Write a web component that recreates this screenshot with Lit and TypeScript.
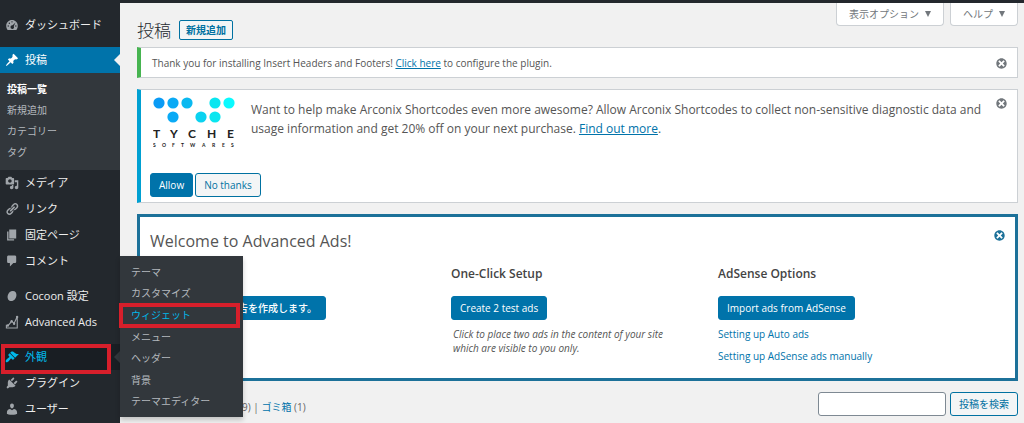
import { LitElement, html, css, svg, nothing } from "lit";
import { customElement, property } from "lit/decorators.js";

const ICONS: Record<string, unknown> = {
  dashboard: svg`<path fill-rule="evenodd" d="M3.76 17h12.48c1.34-1.63 2.01-3.65 2.01-6 0-4.56-3.69-8.25-8.25-8.25S1.75 6.44 1.75 11c0 2.35.67 4.37 2.01 6zM9 5.500a1 1 0 1 1 2 0 1 1 0 0 1-2 0zM5.200 7.500a1 1 0 1 1 2 0 1 1 0 0 1-2 0zM12.500 11.900c.3.4.5.9.5 1.400A2.600 2.600 0 1 1 10.900 10.500L15 6.600zM3.600 11.500a1 1 0 1 1 2 0 1 1 0 0 1-2 0zM14.500 11.500a1 1 0 1 1 2 0 1 1 0 0 1-2 0z"/>`,
  post: svg`<path d="M10.44 3.02l1.82-1.82 6.36 6.35-1.83 1.82c-1.05-.68-2.48-.57-3.41.36l-.75.75c-.92.93-1.04 2.35-.35 3.41l-1.83 1.82-2.41-2.41-2.8 2.79c-.42.42-3.38 2.71-3.8 2.29s1.86-3.39 2.28-3.81l2.79-2.79L4.1 9.36l1.83-1.82c1.05.69 2.48.57 3.4-.36l.75-.75c.93-.92 1.05-2.35.36-3.41z"/>`,
  media: svg`<path fill-rule="evenodd" d="M13 11V4c0-.55-.45-1-1-1h-1.67L9 1H5L3.67 3H2c-.55 0-1 .45-1 1v7c0 .55.45 1 1 1h10c.55 0 1-.45 1-1zM7 4.500c1.380 0 2.500 1.120 2.500 2.500S8.380 9.500 7 9.500 4.500 8.380 4.500 7 5.620 4.500 7 4.500zM14 6h5v10.500c0 1.380-1.120 2.500-2.500 2.500S14 17.880 14 16.500s1.120-2.500 2.500-2.500c.17 0 .34.02.5.05V9h-3V6zm-4 8.050V13h2v3.500c0 1.380-1.120 2.500-2.500 2.500S7 17.880 7 16.500 8.120 14 9.500 14c.17 0 .34.02.5.05z"/>`,
  links: svg`<path d="M17.74 2.76c1.68 1.69 1.68 4.41 0 6.1l-1.53 1.52c-1.12 1.12-2.7 1.47-4.14 1.09l2.62-2.61.76-.77.76-.76c.84-.84.84-2.2 0-3.04-.84-.85-2.2-.85-3.04 0l-.77.76-3.38 3.38c-.37-1.44-.02-3.02 1.1-4.14l1.52-1.53c1.69-1.68 4.42-1.68 6.1 0zM8.59 13.43l5.34-5.34c.42-.42.42-1.1 0-1.52-.44-.43-1.13-.39-1.53 0l-5.33 5.34c-.42.42-.42 1.1 0 1.52.44.43 1.13.39 1.52 0zm-.76 2.29l4.14-4.15c.38 1.44.03 3.02-1.09 4.14l-1.52 1.53c-1.69 1.68-4.41 1.68-6.1 0-1.68-1.68-1.68-4.42 0-6.1l1.53-1.52c1.12-1.12 2.7-1.47 4.14-1.1l-4.14 4.15c-.85.84-.85 2.2 0 3.05.84.84 2.2.84 3.04 0z"/>`,
  page: svg`<path d="M6 15V2h10v13H6zm-1 1h8v2H3V5h2v11z"/>`,
  comment: svg`<path d="M5 2h9c1.100 0 2 .9 2 2v7c0 1.100-.9 2-2 2h-2l-5 5v-5H5c-1.100 0-2-.9-2-2V4c0-1.100.9-2 2-2z"/>`,
  cocoon: svg`<ellipse cx="10" cy="10" rx="6" ry="7.500" transform="rotate(28 10 10)"/>`,
  chart: svg`<path fill="none" stroke="currentColor" stroke-width="1.600" d="M2 14v4.500h15.500V2L13 12l-3.500-3L4 15.500"/><circle cx="9.500" cy="9" r="1.700"/><circle cx="13" cy="12.500" r="1.700"/><circle cx="17.300" cy="2.700" r="1.700"/><circle cx="4" cy="15" r="1.700"/>`,
  appearance: svg`<path d="M14.48 11.06L7.41 3.99l1.5-1.5c.5-.56 2.3-.47 3.51.32 1.21.8 1.43 1.28 2.91 2.1 1.18.64 2.45 1.26 4.45.85zm-.71.71L6.7 4.7 4.93 6.47c-.39.39-.39 1.02 0 1.41l1.06 1.06c.39.39.39 1.03 0 1.42-.6.6-1.43 1.11-2.21 1.69-.35.26-.7.53-1.01.84C1.43 14.23.4 16.08 1.4 17.07c.99 1 2.84-.03 4.18-1.36.31-.31.58-.66.85-1.02.57-.78 1.08-1.61 1.69-2.21.39-.39 1.02-.39 1.41 0l1.06 1.06c.39.39 1.02.39 1.41 0z"/>`,
  plugins: svg`<path d="M13.11 4.36L9.87 7.6 8 5.73l3.24-3.24c.35-.34 1.05-.2 1.56.32.52.51.66 1.21.31 1.55zm-8 1.77l.91-1.12 9.01 9.01-1.19.84c-.71.71-2.63 1.16-3.82 1.16H6.14L4.9 17.26c-.59.59-1.54.59-2.12 0-.59-.58-.59-1.53 0-2.12l1.24-1.24v-3.88c0-1.13.4-3.19 1.09-3.89zm7.26 3.97l3.24-3.24c.34-.35 1.04-.21 1.55.31.52.51.66 1.21.31 1.55l-3.24 3.25z"/>`,
  users: svg`<path d="M10 9.25c-2.27 0-2.73-3.44-2.73-3.44C7 4.02 7.82 2 9.97 2c2.16 0 2.98 2.02 2.71 3.81 0 0-.41 3.44-2.68 3.44zm0 2.57L12.72 10c2.39 0 4.52 2.33 4.52 4.53v2.49s-3.65 1.13-7.24 1.13c-3.65 0-7.24-1.13-7.24-1.13v-2.49c0-2.25 1.94-4.48 4.47-4.48z"/>`,
  dismiss: svg`<path fill-rule="evenodd" d="M10 2c4.420 0 8 3.580 8 8s-3.580 8-8 8-8-3.580-8-8 3.580-8 8-8zm5 11l-3-3 3-3-2-2-3 3-3-3-2 2 3 3-3 3 2 2 3-3 3 3z"/>`,
};

@customElement("dash-icon")
class DashIcon extends LitElement {
  @property() name = "";
  static styles = css`
    :host { display: block; width: 14px; height: 14px; flex: none; }
    svg { display: block; width: 100%; height: 100%; fill: currentColor; }
  `;
  render() {
    return html`<svg viewBox="0 0 20 20" aria-hidden="true">${ICONS[this.name]}</svg>`;
  }
}

interface Item {
  icon: string;
  label: string;
  state?: "current" | "open";
  sub?: string[];
}

const MENU: Item[][] = [
  [{ icon: "dashboard", label: "ダッシュボード" }],
  [
    { icon: "post", label: "投稿", state: "current", sub: ["投稿一覧", "新規追加", "カテゴリー", "タグ"] },
    { icon: "media", label: "メディア" },
    { icon: "links", label: "リンク" },
    { icon: "page", label: "固定ページ" },
    { icon: "comment", label: "コメント" },
  ],
  [
    { icon: "cocoon", label: "Cocoon 設定" },
    { icon: "chart", label: "Advanced Ads" },
  ],
  [
    {
      icon: "appearance",
      label: "外観",
      state: "open",
      sub: ["テーマ", "カスタマイズ", "ウィジェット", "メニュー", "ヘッダー", "背景", "テーマエディター"],
    },
    { icon: "plugins", label: "プラグイン" },
    { icon: "users", label: "ユーザー" },
  ],
];

@customElement("admin-menu")
class AdminMenu extends LitElement {
  static styles = css`
    :host { display: block; background: #23282d; font-size: 11px; }
    nav { display: flex; flex-direction: column; gap: 9px; padding-top: 9px; }
    ul { list-style: none; margin: 0; padding: 0; }
    .item { position: relative; }
    a { text-decoration: none; color: inherit; }
    .top { display: flex; align-items: center; gap: 6px; height: 26px; padding-left: 5px; color: #eee; position: relative; }
    .top dash-icon { color: #a0a5aa; }
    .current > .top { background: #0073aa; color: #fff; }
    .current > .top dash-icon { color: #fff; }
    .current > .top::after, .open > .top::after {
      content: ""; position: absolute; right: 0; top: 7px;
      border: 6px solid transparent; border-left: 0; border-right-color: #f1f1f1;
    }
    .open > .top { background: #191e23; color: #00b9eb; }
    .open > .top dash-icon { color: #00b9eb; }
    .open > .top::after { border-right-color: #32373c; }
    .sub { background: #32373c; color: #b4b9be; font-size: 10px; }
    .current .sub { padding: 6px 7px 7px; line-height: 21px; }
    .current .sub li:first-child { color: #fff; font-weight: 700; }
    .open .sub {
      position: absolute; left: 100%; bottom: -47px; z-index: 2; box-sizing: border-box;
      width: 123px; height: 161px; padding: 5px 0; display: flex; flex-direction: column;
      box-shadow: 0 3px 5px rgba(0, 0, 0, 0.2);
    }
    .open .sub li { flex: 1; display: flex; align-items: center; padding-left: 11px; position: relative; }
    .open .sub .marked { color: #00b9eb; }
    .mark { position: absolute; border: 4px solid #d71f2b; box-sizing: border-box; pointer-events: none; z-index: 3; }
    .mark-top { left: 1px; right: 9px; top: 0; height: 30px; }
    .mark-sub { left: -1px; right: 3px; top: -1px; height: 25px; }
  `;

  private row(item: Item) {
    const open = item.state === "open";
    return html`<li class="item ${item.state ?? ""}">
      <a class="top" href="#"><dash-icon name=${item.icon}></dash-icon><span>${item.label}</span></a>
      ${item.sub
        ? html`<ul class="sub">
            ${item.sub.map((s, i) =>
              open && i === 2
                ? html`<li class="marked"><a href="#">${s}</a><span class="mark mark-sub"></span></li>`
                : html`<li><a href="#">${s}</a></li>`
            )}
          </ul>`
        : nothing}
      ${open ? html`<span class="mark mark-top"></span>` : nothing}
    </li>`;
  }

  render() {
    return html`<nav>${MENU.map((g) => html`<ul>${g.map((i) => this.row(i))}</ul>`)}</nav>`;
  }
}

const DOTS: [number, number, string][] = [
  [6, 6, "#0a9bf5"], [20, 6, "#0aaaf5"], [34, 6, "#0ab9f0"], [62, 6, "#0ae6f0"], [76, 6, "#0afaff"],
  [20, 20, "#0aaaf5"], [48, 20, "#0ad2f0"], [62, 20, "#0ae6f0"],
];

@customElement("app-root")
class AppRoot extends LitElement {
  static styles = css`
    :host {
      display: block; min-height: 100vh; background: #f1f1f1; color: #555;
      font: 10px/16px "Open Sans", "Noto Sans CJK JP", sans-serif;
    }
    .bar { height: 3px; background: #23282d; }
    .layout { display: grid; grid-template-columns: 120px minmax(0, 1fr); min-height: calc(100vh - 3px); }
    main { padding: 0 6px 0 17px; }
    h1, h2, h3, p { margin: 0; }
    a { color: #0073aa; }
    button { font: inherit; margin: 0; cursor: pointer; }
    header { display: flex; justify-content: space-between; align-items: flex-start; height: 44px; }
    .title { display: flex; align-items: center; gap: 8px; padding-top: 15px; }
    h1 { font-family: "Noto Sans CJK JP", sans-serif; font-size: 17px; line-height: 24px; font-weight: 300; color: #23282d; }
    .btn {
      box-sizing: border-box; height: 24px; padding: 0 8px; border: 1px solid #0071a1; border-radius: 3px;
      background: #f3f5f6; color: #0071a1; line-height: 20px; white-space: nowrap;
    }
    .primary { background: #0073aa; border-color: #0073aa; color: #fff; }
    .add { height: 20px; padding: 0 6px; line-height: 16px; font-weight: 600; border-radius: 2px; }
    .tabs { display: flex; gap: 6px; }
    .tab {
      height: 23px; padding: 0 12px; background: #fff; border: 1px solid #ccd0d4; border-top: 0;
      border-radius: 0 0 4px 4px; color: #72777c; display: flex; align-items: center; gap: 6px;
    }
    .caret { border: 3px solid transparent; border-top: 6px solid #72777c; border-bottom: 0; }
    .notice { background: #fff; border: 1px solid #ccd0d4; border-left: 4px solid #46b450; margin-bottom: 11px; display: flex; justify-content: space-between; }
    .thanks { align-items: center; padding: 7px 9px 6px 11px; }
    .info { border-left-color: #00a0d2; padding: 7px 9px 5px 9px; align-items: flex-start; }
    .dismiss { border: 0; padding: 0; background: none; color: #72777c; display: block; }
    .dismiss dash-icon { width: 13px; height: 13px; }
    .pitch { display: flex; gap: 14px; height: 76px; }
    .pitch p { font-size: 12px; line-height: 19px; padding-top: 3px; }
    .logo { flex: none; width: 84px; height: 52px; margin-left: 3px; }
    .logo text { font-family: Lato, sans-serif; fill: #222; }
    .big { font-size: 12px; font-weight: 700; }
    .small { font-size: 5px; font-weight: 700; }
    .actions { display: flex; gap: 2px; }
    .welcome { background: #fff; border: 3px solid #1c7199; padding: 12px 9px 8px 10px; margin-bottom: 11px; }
    .head { display: flex; justify-content: space-between; align-items: flex-start; }
    .head h2 { font-size: 16px; line-height: 24px; font-weight: 400; }
    .head .dismiss { color: #1c7199; }
    .cols { display: grid; grid-template-columns: 301fr 267fr 288fr; padding-top: 13px; }
    .cols > div { display: flex; flex-direction: column; align-items: flex-start; }
    h3 { font-size: 12px; line-height: 16px; font-weight: 600; color: #444; margin-bottom: 14px; }
    .cols .btn { margin-bottom: 6px; }
    .cols .start { padding-top: 30px; }
    .first { min-width: 176px; text-align: right; font-weight: 500; }
    .cols p { font-style: italic; line-height: 14px; padding: 1px 0 0 2px; width: 216px; }
    .cols a { text-decoration: none; margin-bottom: 6px; }
    .foot { display: flex; justify-content: space-between; }
    .views { padding-top: 7px; color: #666; white-space: nowrap; }
    .views a { text-decoration: none; }
    .search { display: flex; gap: 4px; }
    .search input { box-sizing: border-box; width: 128px; height: 24px; border: 1px solid #7e8993; border-radius: 3px; background: #fff; }
  `;

  render() {
    const dismiss = html`<button class="dismiss" aria-label="閉じる"><dash-icon name="dismiss"></dash-icon></button>`;
    return html`
      <div class="bar"></div>
      <div class="layout">
        <admin-menu></admin-menu>
        <main>
          <header>
            <div class="title"><h1>投稿</h1><button class="btn add">新規追加</button></div>
            <div class="tabs">
              <button class="tab">表示オプション<span class="caret"></span></button>
              <button class="tab">ヘルプ<span class="caret"></span></button>
            </div>
          </header>
          <section class="notice thanks">
            <p>Thank you for installing Insert Headers and Footers! <a href="#">Click here</a> to configure the plugin.</p>
            ${dismiss}
          </section>
          <section class="notice info">
            <div>
              <div class="pitch">
                <svg class="logo" viewBox="0 0 84 52" role="img" aria-label="Tyche Softwares">
                  ${DOTS.map(([x, y, c]) => svg`<circle cx=${x} cy=${y} r="5.6" fill=${c} />`)}
                  <text class="big" x="0 17 35 54 74" y="41">TYCHE</text>
                  <text class="small" x="0 9 19 28 37 49 59 69 78" y="50">SOFTWARES</text>
                </svg>
                <p>Want to help make Arconix Shortcodes even more awesome? Allow Arconix Shortcodes to collect non-sensitive diagnostic data and usage information and get 20% off on your next purchase. <a href="#">Find out more</a>.</p>
              </div>
              <div class="actions"><button class="btn primary">Allow</button><button class="btn">No thanks</button></div>
            </div>
            ${dismiss}
          </section>
          <section class="welcome">
            <div class="head"><h2>Welcome to Advanced Ads!</h2>${dismiss}</div>
            <div class="cols">
              <div class="start"><button class="btn primary first">最初の広告を作成します。</button></div>
              <div>
                <h3>One-Click Setup</h3>
                <button class="btn primary">Create 2 test ads</button>
                <p>Click to place two ads in the content of your site which are visible to you only.</p>
              </div>
              <div>
                <h3>AdSense Options</h3>
                <button class="btn primary">Import ads from AdSense</button>
                <a href="#">Setting up Auto ads</a>
                <a href="#">Setting up AdSense ads manually</a>
              </div>
            </div>
          </section>
          <div class="foot">
            <div class="views"><a href="#">すべて</a> (10) | <a href="#">公開済み</a> (9) | <a href="#">ゴミ箱</a> (1)</div>
            <form class="search" role="search">
              <input type="search" aria-label="投稿を検索" /><button type="button" class="btn">投稿を検索</button>
            </form>
          </div>
        </main>
      </div>
    `;
  }
}
